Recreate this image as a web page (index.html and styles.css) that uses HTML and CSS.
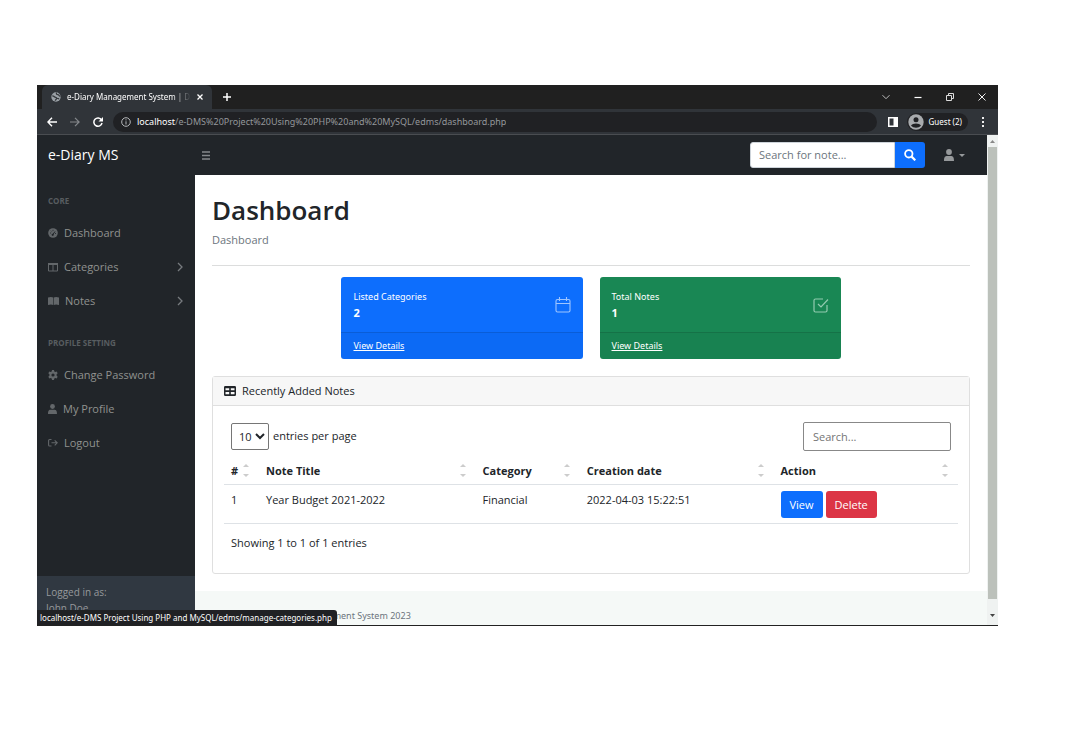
FILE: index.html
```html
<!DOCTYPE html>
<html lang="en">
<head>
<meta charset="utf-8">
<title>e-Diary Management System | Dashboard</title>
<link rel="stylesheet" href="styles.css">
</head>
<body>
<div class="window">
  <header class="tabstrip">
    <div class="tab">
      <svg class="icon" width="10" height="10" viewBox="0 0 16 16"><circle cx="8" cy="8" r="7.5" fill="#9aa0a6"/><path d="M2 6c2 0 3 1 4 2s3 0 3 2-2 2-2 4M9 1c-1 2 0 3 2 3s1 3 4 3M10 10l3 1" stroke="#35383c" stroke-width="2" fill="none"/></svg>
      <span class="tab-title">e-Diary Management System | Dashboard</span>
      <button class="chrome-btn" aria-label="Close tab"><svg width="6" height="6" viewBox="0 0 6 6"><path d="M.5.5l5 5M5.500.5l-5 5" stroke="#fff" stroke-width="1.3"/></svg></button>
    </div>
    <button class="chrome-btn new-tab" aria-label="New tab"><svg width="8" height="8" viewBox="0 0 8 8"><path d="M4 0v8M0 4h8" stroke="#fff" stroke-width="1.5"/></svg></button>
    <div class="window-controls">
      <button class="chrome-btn" aria-label="Search tabs"><svg width="8" height="8" viewBox="0 0 8 8"><path d="M.5 2.200L4 5.700l3.500-3.500" stroke="#bbb" fill="none"/></svg></button>
      <button class="chrome-btn" aria-label="Minimize"><svg width="8" height="8" viewBox="0 0 8 8"><path d="M.5 4.500h7" stroke="#fff" stroke-width="1.200"/></svg></button>
      <button class="chrome-btn" aria-label="Restore"><svg width="8" height="8" viewBox="0 0 8 8"><path d="M.5 2.500h5v5h-5zM2.500 2.500v-2h5v5h-2" stroke="#ddd" fill="none"/></svg></button>
      <button class="chrome-btn" aria-label="Close window"><svg width="8" height="8" viewBox="0 0 8 8"><path d="M.5.5l7 7M7.500.5l-7 7" stroke="#eee"/></svg></button>
    </div>
  </header>
  <div class="toolbar">
    <button class="chrome-btn" aria-label="Back"><svg width="10" height="10" viewBox="0 0 10 10"><path d="M10 5H1M5 .8L.9 5 5 9.200" stroke="#fff" stroke-width="1.400" fill="none"/></svg></button>
    <button class="chrome-btn" aria-label="Forward"><svg width="10" height="10" viewBox="0 0 10 10"><path d="M0 5h9M5 .8L9.100 5 5 9.200" stroke="#85888c" stroke-width="1.200" fill="none"/></svg></button>
    <button class="chrome-btn" aria-label="Reload"><svg width="10" height="10" viewBox="0 0 10 10"><path d="M8.500 3A4.100 4.100 0 1 0 9 6" stroke="#fff" stroke-width="1.500" fill="none"/><path d="M10 0v4.500H5.500z" fill="#fff"/></svg></button>
    <div class="omnibox">
      <svg class="icon" width="10" height="10" viewBox="0 0 10 10"><circle cx="5" cy="5" r="4.300" stroke="#b4b7ba" fill="none"/><path d="M5 4.300v3.200M5 2.300v1.100" stroke="#b4b7ba"/></svg>
      <span class="url"><b>localhost</b>/e-DMS%20Project%20Using%20PHP%20and%20MySQL/edms/dashboard.php</span>
    </div>
    <button class="chrome-btn" aria-label="Side panel"><svg width="10" height="10" viewBox="0 0 10 10"><path d="M0 0h10v10H0zM1.500 1.500v7h4v-7z" fill="#fff" fill-rule="evenodd"/></svg></button>
    <button class="guest"><svg class="icon" width="16" height="16" viewBox="0 0 16 16"><circle cx="8" cy="8" r="7.700" fill="#a8abae"/><circle cx="8" cy="5.700" r="2.500" fill="#202124"/><path d="M3 11.500C4.500 8.800 11.500 8.800 13 11.500 10.500 14.500 5.500 14.500 3 11.500z" fill="#202124"/></svg>Guest (2)</button>
    <button class="chrome-btn" aria-label="Menu"><svg width="4" height="10" viewBox="0 0 4 10"><path d="M1 0h2v2H1zM1 4h2v2H1zM1 8h2v2H1z" fill="#eee"/></svg></button>
  </div>

  <div class="viewport">
    <div class="page">
      <nav class="topnav">
        <a class="brand" href="#">e-Diary MS</a>
        <button class="plain-btn" aria-label="Toggle navigation"><svg width="8" height="9" viewBox="0 0 8 9"><path d="M0 1h8M0 4.500h8M0 8h8" stroke="#85888b" stroke-width="1.300"/></svg></button>
        <form class="search">
          <input type="text" placeholder="Search for note..." aria-label="Search for note">
          <button type="button" aria-label="Search"><svg width="12" height="12" viewBox="0 0 12 12"><circle cx="4.800" cy="4.800" r="3.700" stroke="#fff" stroke-width="1.800" fill="none"/><path d="M7.600 7.600l3.700 3.700" stroke="#fff" stroke-width="2.200"/></svg></button>
        </form>
        <button class="plain-btn user" aria-label="Account"><svg width="10" height="12" viewBox="0 0 10 12"><circle cx="5" cy="3" r="2.900" fill="#96999b"/><path d="M0 12c0-6 2.500-5 5-5s5-1 5 5z" fill="#96999b"/></svg><svg width="6" height="3" viewBox="0 0 6 3"><path d="M0 0h6L3 3z" fill="#96999b"/></svg></button>
      </nav>
      <div class="columns">
        <aside class="sidebar">
          <div class="menu">
            <h2>CORE</h2>
            <a href="#"><svg width="10" height="10" viewBox="0 0 10 10"><circle cx="5" cy="5" r="4.800" fill="#63676a"/><path d="M4.500 7L7 3.500M2.200 5h.9M3 2.800l.6.6M5 1.800v.9M7.200 5.500h.8" stroke="#212529"/><circle cx="4.700" cy="6.800" r="1.100" fill="#212529"/></svg>Dashboard</a>
            <a href="#"><svg width="10" height="10" viewBox="0 0 10 10"><path d="M.5 1.500h9v7.500h-9zM5 2v7" stroke="#63676a" fill="none"/><path d="M0 1h10v2H0z" fill="#63676a"/></svg>Categories<svg class="caret" width="6" height="10" viewBox="0 0 6 10"><path d="M1 1l4 4-4 4" stroke="#777b7e" stroke-width="1.300" fill="none"/></svg></a>
            <a href="#"><svg width="11" height="10" viewBox="0 0 11 10"><path d="M0 1.500C2 .7 4 .8 5.200 1.500V9C4 8.300 2 8.300 0 9zM5.800 1.500C7 .8 9 .7 11 1.500V9c-2-.7-4-.7-5.200 0z" fill="#63676a"/></svg>Notes<svg class="caret" width="6" height="10" viewBox="0 0 6 10"><path d="M1 1l4 4-4 4" stroke="#777b7e" stroke-width="1.300" fill="none"/></svg></a>
            <h2>PROFILE SETTING</h2>
            <a href="#"><svg width="10" height="10" viewBox="0 0 10 10"><path d="M4 0h2l.3 1.500 1 .5L8.700 1.500l1 1.700L8.600 4.300v1.400l1.100 1.100-1 1.700L7.300 8l-1 .5L6 10H4l-.3-1.500-1-.5-1.400.5-1-1.700 1.100-1.100V4.300L.3 3.200l1-1.700L2.700 2l1-.5zM5 3.400a1.600 1.600 0 1 0 0 3.200 1.600 1.600 0 0 0 0-3.200z" fill="#63676a" fill-rule="evenodd"/></svg>Change Password</a>
            <a href="#"><svg width="9" height="10" viewBox="0 0 9 10"><circle cx="4.500" cy="2.500" r="2.400" fill="#63676a"/><path d="M0 10c0-5 2-4.300 4.500-4.300S9 5 9 10z" fill="#63676a"/></svg>My Profile</a>
            <a href="#"><svg width="10" height="10" viewBox="0 0 10 10"><path d="M3.500 1.500H1.700Q.6 1.500.6 2.600v4.300q0 1.100 1.100 1.100h1.800M3.500 4.800H9M6.700 2.300l2.500 2.500-2.500 2.500" stroke="#63676a" stroke-width="1.100" fill="none"/></svg>Logout</a>
          </div>
          <div class="login"><span>Logged in as:</span><span>John Doe</span></div>
        </aside>
        <div class="content">
          <main>
            <h1>Dashboard</h1>
            <p class="crumb">Dashboard</p>
            <hr>
            <section class="stats">
              <article class="stat blue">
                <div class="stat-body"><div><span>Listed Categories</span><strong>2</strong></div>
                <svg width="16" height="18" viewBox="0 0 16 18"><path d="M2.500 3.500h11q1.500 0 1.500 1.500v9.500q0 1.500-1.500 1.500h-11Q1 16 1 14.500V5q0-1.500 1.500-1.500zM1 7.500h14M4.500 1v4M11.500 1v4" stroke="#9fc5ff" stroke-width="1.100" fill="none"/></svg></div>
                <div class="stat-foot"><a href="#">View Details</a></div>
              </article>
              <article class="stat green">
                <div class="stat-body"><div><span>Total Notes</span><strong>1</strong></div>
                <svg width="16" height="18" viewBox="0 0 16 18"><path d="M10 3H2.500Q1 3 1 4.500v10Q1 16 2.500 16h10q1.500 0 1.500-1.500V9M5 8l3 3 7-7.500" stroke="#93cbb0" stroke-width="1.200" fill="none"/></svg></div>
                <div class="stat-foot"><a href="#">View Details</a></div>
              </article>
            </section>
            <section class="card">
              <h2 class="card-head"><svg width="12" height="10" viewBox="0 0 12 10"><path d="M1.300 0h9.400Q12 0 12 1.300v7.400Q12 10 10.700 10H1.300Q0 10 0 8.700V1.300Q0 0 1.300 0zM1.500 2.300v2h3.700v-2zM6.800 2.300v2h3.700v-2zM1.500 6v2.300h3.700V6zM6.800 6v2.300h3.700V6z" fill="#212529" fill-rule="evenodd"/></svg>Recently Added Notes</h2>
              <div class="card-body">
                <div class="table-tools">
                  <label><select><option>10</option></select>entries per page</label>
                  <input type="search" placeholder="Search..." aria-label="Search notes">
                </div>
                <table>
                  <colgroup><col class="c-num"><col class="c-title"><col class="c-cat"><col class="c-date"><col class="c-act"></colgroup>
                  <thead><tr>
                    <th><button>#<i class="sort"></i></button></th>
                    <th><button>Note Title<i class="sort"></i></button></th>
                    <th><button>Category<i class="sort"></i></button></th>
                    <th><button>Creation date<i class="sort"></i></button></th>
                    <th><button>Action<i class="sort"></i></button></th>
                  </tr></thead>
                  <tbody><tr>
                    <td>1</td><td>Year Budget 2021-2022</td><td>Financial</td><td>2022-04-03 15:22:51</td>
                    <td><div class="actions"><a class="btn view" href="#">View</a><a class="btn delete" href="#">Delete</a></div></td>
                  </tr></tbody>
                </table>
                <p class="info">Showing 1 to 1 of 1 entries</p>
              </div>
            </section>
          </main>
          <footer>Copyright © e-Diary Management System 2023</footer>
        </div>
      </div>
    </div>
    <div class="scrollbar">
      <svg width="11" height="12" viewBox="0 0 11 12"><path d="M3 8h5L5.500 5z" fill="#888"/></svg>
      <div class="thumb"></div>
      <svg width="11" height="16" viewBox="0 0 11 16"><path d="M3 6h5L5.500 9z" fill="#444"/></svg>
    </div>
  </div>
  <div class="status">localhost/e-DMS Project Using PHP and MySQL/edms/manage-categories.php</div>
</div>
</body>
</html>
```
FILE: styles.css
```css
* { box-sizing: border-box; }
body {
  margin: 0;
  min-height: 100vh;
  padding: 85px 82px 129px 37px;
  display: flex;
  background: #fff;
  color: #212529;
  font: 11px/16px "Open Sans", "Noto Sans", sans-serif;
}
button, input, select { font: inherit; color: inherit; }
button { cursor: pointer; }
svg { display: block; flex: none; }
h1, h2, p { margin: 0; }

.window {
  flex: 1;
  min-width: 0;
  position: relative;
  display: flex;
  flex-direction: column;
  overflow: hidden;
  border-bottom: 1px solid #222;
}
.chrome-btn, .plain-btn {
  display: flex;
  align-items: center;
  padding: 0;
  border: 0;
  background: none;
}
.tab-title, .url, .guest, .status, .stat, footer {
  font-family: "Noto Sans", "Open Sans", sans-serif;
}

/* Browser frame */
.tabstrip {
  display: flex;
  align-items: center;
  height: 24px;
  padding: 0 12px 0 5px;
  background: #202020;
}
.tab {
  display: flex;
  align-items: center;
  gap: 6px;
  width: 170px;
  height: 24px;
  padding: 0 9px;
  border-radius: 6px 6px 0 0;
  background: #303439;
}
.tab-title {
  flex: 1;
  overflow: hidden;
  white-space: nowrap;
  font-size: 8px;
  color: #fff;
  -webkit-mask-image: linear-gradient(90deg, #000 85%, transparent);
  mask-image: linear-gradient(90deg, #000 85%, transparent);
}
.new-tab { margin-left: 11px; }
.window-controls {
  display: flex;
  gap: 24px;
  margin-left: auto;
}
.window-controls .chrome-btn { height: 8px; }
.toolbar {
  display: flex;
  align-items: center;
  gap: 13px;
  height: 26px;
  padding: 0 13px 0 10px;
  background: #303439;
  border-bottom: 1px solid #4a4d51;
}
.omnibox {
  flex: 1;
  display: flex;
  align-items: center;
  gap: 6px;
  min-width: 0;
  height: 20px;
  margin: 0 -2px 0 -3px;
  padding: 0 8px;
  border-radius: 10px;
  background: #202124;
}
.url {
  overflow: hidden;
  white-space: nowrap;
  font-size: 9px;
  color: #94979b;
}
.url b { font-weight: 400; color: #fff; }
.guest {
  display: flex;
  align-items: center;
  gap: 5px;
  height: 18px;
  margin-left: -4px;
  padding: 0 6px 0 1px;
  border: 0;
  border-radius: 9px;
  background: #202124;
  color: #fff;
  font-size: 8px;
}

/* Page */
.viewport { flex: 1; display: flex; min-height: 0; }
.page { flex: 1; min-width: 0; display: flex; flex-direction: column; }
.topnav {
  display: flex;
  align-items: center;
  height: 40px;
  padding-right: 22px;
  background: #212529;
}
.brand {
  width: 165px;
  padding: 0 11px;
  color: #fff;
  font-size: 14px;
  text-decoration: none;
}
.search { display: flex; height: 26px; margin: 0 19px 0 auto; }
.search input {
  width: 145px;
  padding: 0 8px;
  border: 1px solid #ced4da;
  border-radius: 3px 0 0 3px;
  background: #fff;
  outline: 0;
}
.search input::placeholder { color: #6c757d; opacity: 1; }
.search button {
  display: grid;
  place-items: center;
  width: 30px;
  padding: 0;
  border: 0;
  border-radius: 0 3px 3px 0;
  background: #0d6efd;
}
.user { gap: 5px; }
.columns { flex: 1; display: flex; min-height: 0; }

/* Sidebar */
.sidebar {
  display: flex;
  flex-direction: column;
  width: 158px;
  background: #212529;
}
.menu { flex: 1; padding: 6px 12px 0 11px; }
.menu h2 {
  padding: 12px 0 7px;
  color: #585d60;
  font-size: 8px;
  line-height: 16px;
}
.menu a + h2 { padding-top: 17px; }
.menu a {
  display: flex;
  align-items: center;
  gap: 6px;
  height: 34px;
  color: #90928f;
  text-decoration: none;
}
.menu .caret { margin-left: auto; }
.login {
  display: flex;
  flex-direction: column;
  height: 49px;
  padding: 8px 9px;
  background: #303841;
  color: #96999c;
  font-size: 10px;
}

/* Content */
.content { flex: 1; min-width: 0; display: flex; flex-direction: column; }
main { flex: 1; padding: 16px 17px 17px; }
h1 { font-size: 26px; font-weight: 600; line-height: 38px; }
.crumb { margin-top: 3px; color: #6c757d; }
hr { margin: 17px 0 11px; border: 0; border-top: 1px solid #dcdddd; }
.stats { display: flex; justify-content: center; gap: 17px; }
.stat {
  flex: 0 0 31.8%;
  border-radius: 3px;
  color: #fff;
  font-size: 9px;
}
.stat.blue { background: #0d6efd; }
.stat.green { background: #198754; }
.stat a { color: #fff; }
.stat-body {
  display: flex;
  align-items: center;
  justify-content: space-between;
  height: 55px;
  padding: 0 12px;
}
.stat-body span, .stat-body strong { display: block; }
.stat-body strong { font-size: 11px; }
.stat-foot {
  padding: 5px 12px;
  border-top: 1px solid rgba(0, 0, 0, .12);
  background: rgba(0, 0, 0, .03);
}
.card {
  margin-top: 17px;
  border: 1px solid #dfdfdf;
  border-radius: 3px;
}
.card-head {
  display: flex;
  align-items: center;
  gap: 6px;
  padding: 6px 11px;
  border-bottom: 1px solid #dfdfdf;
  background: #f7f7f7;
  font-size: 11px;
  font-weight: 400;
}
.card-body { padding: 16px 11px 22px; }
.table-tools {
  display: flex;
  justify-content: space-between;
  padding: 0 7px 6px;
}
.table-tools label { display: flex; align-items: center; gap: 4px; height: 28px; }
.table-tools select {
  width: 38px;
  height: 27px;
  padding: 0 0 0 3px;
  border: 1px solid #767676;
  border-radius: 2px;
  background: #fff;
}
.table-tools input {
  width: 148px;
  height: 29px;
  padding: 0 9px;
  border: 1px solid #888;
  border-radius: 2px;
  outline: 0;
}
.table-tools input::placeholder { color: #757575; opacity: 1; }
table { width: 100%; table-layout: fixed; border-collapse: collapse; }
.c-num { width: 35px; }
.c-title { width: 29.5%; }
.c-cat { width: 14.2%; }
.c-date { width: 26.4%; }
th, td { border-bottom: 1px solid #dee2e6; text-align: left; vertical-align: top; }
th { padding: 0 10px 0 7px; }
td { padding: 6px 7px 5px; }
td { line-height: 18px; }
th button {
  display: flex;
  align-items: center;
  justify-content: space-between;
  width: 100%;
  height: 27px;
  padding: 0;
  border: 0;
  background: none;
  font-weight: 700;
}
.sort {
  display: flex;
  flex-direction: column;
  justify-content: space-between;
  height: 13px;
}
.sort::before, .sort::after {
  content: "";
  border: 3px solid transparent;
}
.sort::before { border-top: 0; border-bottom-color: #ccc; }
.sort::after { border-bottom: 0; border-top-color: #ccc; }
.actions { display: flex; gap: 3px; }
.btn {
  padding: 5px 9px 4px;
  border-radius: 3px;
  color: #fff;
  text-decoration: none;
}
.view { background: #0d6efd; }
.delete { background: #dc3545; }
.info { padding: 11px 7px 0; }
footer {
  height: 34px;
  padding: 16px 17px 0;
  background: #f5f9f7;
  color: #6c757d;
  font-size: 9px;
  line-height: 18px;
}

.scrollbar {
  display: flex;
  flex-direction: column;
  width: 11px;
  background: #eff2f1;
}
.thumb { flex: 1; margin: 0 1px; background: #bcc1bb; }
.scrollbar svg:last-child { height: 26px; padding-top: 8px; }

.status {
  position: absolute;
  left: 0;
  bottom: 0;
  padding: 0 5px 0 3px;
  border-top-right-radius: 3px;
  background: #202124;
  color: #fff;
  font-size: 8px;
  line-height: 15px;
  white-space: nowrap;
}
```
